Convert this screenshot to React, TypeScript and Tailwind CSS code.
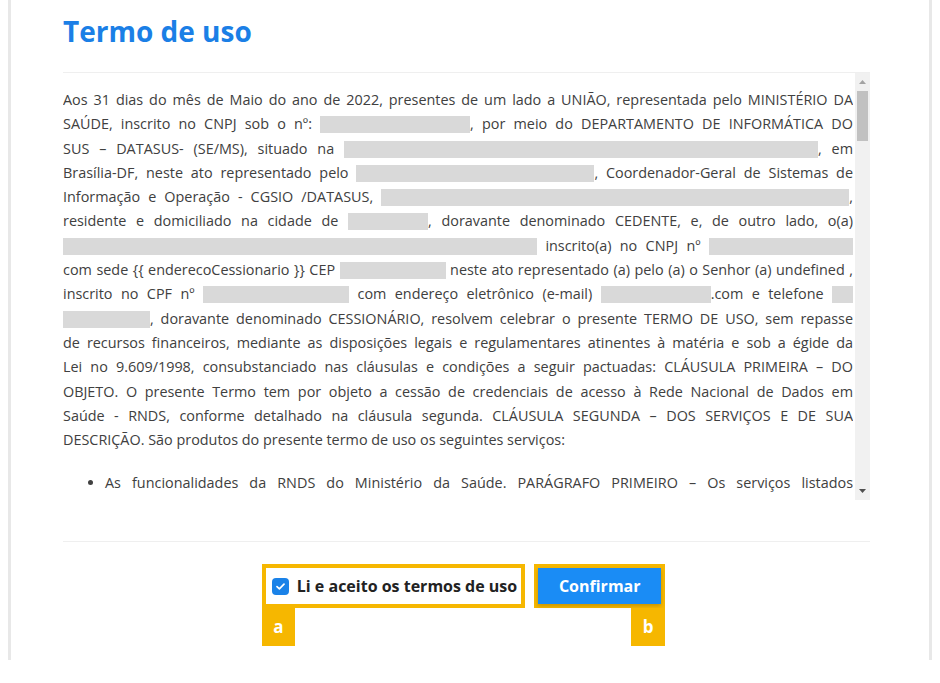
import React from 'react';

function Gray({ w }: { w: number }) {
    return <span className="inline-block h-[17px] bg-[#d9d9d9] align-[-4px]" style={{ width: w }} />;
}

function Line({ children, last = false }: { children: React.ReactNode; last?: boolean }) {
    return (
        <div className={last ? 'whitespace-nowrap text-left' : 'whitespace-nowrap text-justify [text-align-last:justify]'}>
            {children}
        </div>
    );
}

export default function App() {
    return (
        <div className="h-[683px] w-[940px] bg-white font-['Open_Sans','Noto_Sans',sans-serif] text-[#404040]">
            <div className="mx-[8px] h-[660px] border-x-[3px] border-[#e8e8e8] pl-[52px] pr-[59px] pt-[12px]">
                <h1 className="text-[28px] font-bold leading-[38px] text-[#1b7fe6]">Termo de uso</h1>

                {/* caixa com o texto do termo */}
                <div className="mt-[22px] flex h-[428px] gap-[2px] border-t border-[#efefef]">
                    <div className="w-[790px] overflow-hidden pt-[15px] text-[14.4px] leading-[24.3px]">
                        <Line>Aos 31 dias do mês de Maio do ano de 2022, presentes de um lado a UNIÃO, representada pelo MINISTÉRIO DA</Line>
                        <Line>SAÚDE, inscrito no CNPJ sob o nº: <Gray w={150} />, por meio do DEPARTAMENTO DE INFORMÁTICA DO</Line>
                        <Line>SUS – DATASUS- (SE/MS), situado na <Gray w={474} />, em</Line>
                        <Line>Brasília-DF, neste ato representado pelo <Gray w={238} />, Coordenador-Geral de Sistemas de</Line>
                        <Line>Informação e Operação - CGSIO /DATASUS, <Gray w={468} />,</Line>
                        <Line>residente e domiciliado na cidade de <Gray w={80} />, doravante denominado CEDENTE, e, de outro lado, o(a)</Line>
                        <Line><Gray w={474} /> inscrito(a) no CNPJ nº <Gray w={144} /></Line>
                        <Line>com sede {'{{'} enderecoCessionario {'}}'} CEP <Gray w={106} /> neste ato representado (a) pelo (a) o Senhor (a) undefined ,</Line>
                        <Line>inscrito no CPF nº <Gray w={146} /> com endereço eletrônico (e-mail) <Gray w={110} />.com e telefone <Gray w={21} /></Line>
                        <Line><Gray w={87} />, doravante denominado CESSIONÁRIO, resolvem celebrar o presente TERMO DE USO, sem repasse</Line>
                        <Line>de recursos financeiros, mediante as disposições legais e regulamentares atinentes à matéria e sob a égide da</Line>
                        <Line>Lei no 9.609/1998, consubstanciado nas cláusulas e condições a seguir pactuadas: CLÁUSULA PRIMEIRA – DO</Line>
                        <Line>OBJETO. O presente Termo tem por objeto a cessão de credenciais de acesso à Rede Nacional de Dados em</Line>
                        <Line>Saúde - RNDS, conforme detalhado na cláusula segunda. CLÁUSULA SEGUNDA – DOS SERVIÇOS E DE SUA</Line>
                        <Line last>DESCRIÇÃO. São produtos do presente termo de uso os seguintes serviços:</Line>

                        <ul className="mt-[19px] list-disc pl-[42px]">
                            <li>
                                <Line>As funcionalidades da RNDS do Ministério da Saúde. PARÁGRAFO PRIMEIRO – Os serviços listados</Line>
                            </li>
                        </ul>
                    </div>

                    {/* barra de rolagem */}
                    <div className="flex w-[15px] flex-col bg-[#f1f1f1]">
                        <div className="flex h-[18px] items-center justify-center">
                            <svg width="7" height="4" viewBox="0 0 7 4"><path d="M0 4 L3.5 0 L7 4 Z" fill="#a3a3a3" /></svg>
                        </div>
                        <div className="mx-[2px] h-[50px] bg-[#c1c1c1]" />
                        <div className="flex-1" />
                        <div className="flex h-[18px] items-center justify-center">
                            <svg width="7" height="4" viewBox="0 0 7 4"><path d="M0 0 L7 0 L3.5 4 Z" fill="#505050" /></svg>
                        </div>
                    </div>
                </div>

                <div className="mt-[41px] border-t border-[#efefef]" />

                <div className="mt-[22px] flex justify-center gap-[9px] pr-[6px]">
                    <div className="relative">
                        <label className="flex h-[44px] items-center gap-[8px] border-[4px] border-[#f6b700] pl-[6px] pr-[4px]">
                            <span className="flex h-[17px] w-[17px] items-center justify-center rounded-[4px] bg-[#1a82e8]">
                                <svg width="9" height="7" viewBox="0 0 9 7" fill="none">
                                    <path d="M1 3.6 L3.4 5.8 L8 1.2" stroke="white" strokeWidth="1.7" strokeLinecap="round" strokeLinejoin="round" />
                                </svg>
                            </span>
                            <span className="text-[16px] font-bold text-[#222]">Li e aceito os termos de uso</span>
                        </label>
                        <div className="absolute left-0 top-[44px] flex h-[38px] w-[33px] items-center justify-center bg-[#f6b700] text-[17px] font-bold text-white">a</div>
                    </div>

                    <div className="relative">
                        <div className="flex h-[44px] border-[4px] border-[#f6b700]">
                            <button className="h-full w-[123px] bg-[#1a8cf5] text-[16px] font-bold text-white shadow-[0_2px_4px_rgba(0,0,0,0.2)]">Confirmar</button>
                        </div>
                        <div className="absolute right-0 top-[44px] flex h-[38px] w-[34px] items-center justify-center bg-[#f6b700] text-[17px] font-bold text-white">b</div>
                    </div>
                </div>
            </div>
        </div>
    );
}
